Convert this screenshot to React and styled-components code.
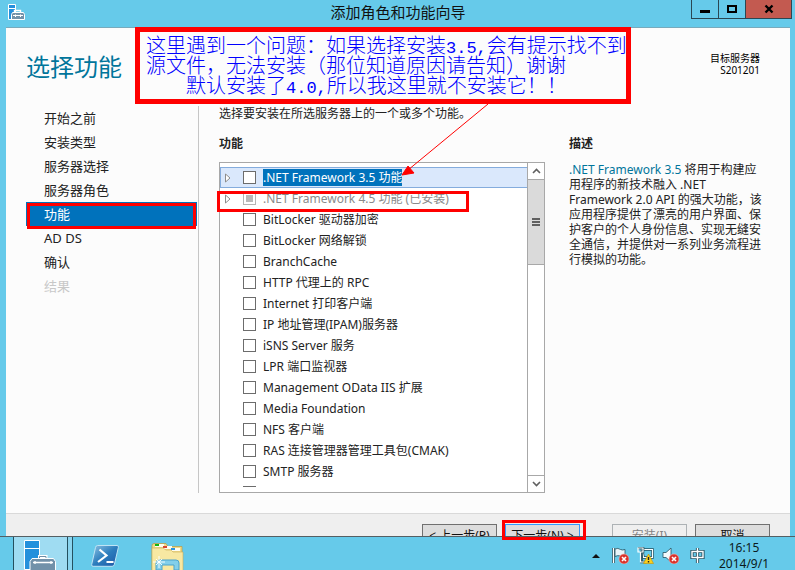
import React, { useState } from 'react'
import styled, { createGlobalStyle, css } from 'styled-components'

const colors = {
    sky: '#66caea',
    panel: '#fcfcfc',
    accent: '#0072bc',
    title: '#00759b',
    text: '#222222',
    muted: '#c8c8c8',
    line: '#a8a8a8',
    mark: '#ff0000',
}

const GlobalStyle = createGlobalStyle`
    *
    {
        box-sizing: border-box;
    }
    body
    {
        margin: 0;
        overflow: hidden;
        font-family: "Noto Sans", "Noto Sans CJK SC", sans-serif;
        font-size: 12px;
        color: ${colors.text};
    }
    button, input
    {
        font: inherit;
        color: inherit;
        margin: 0;
        padding: 0;
    }
    h1, h2, p, ul
    {
        margin: 0;
        padding: 0;
    }
`
const Desktop = styled.div`
    position: relative;
    display: flex;
    flex-direction: column;
    height: 100vh;
    overflow: hidden;
    background-color: ${colors.sky};
`
const Window = styled.section`
    flex: 1;
    min-height: 0;
    padding: 0 5px 0 6px;
`
const TitleBar = styled.header`
    display: grid;
    grid-template-columns: 1fr auto 1fr;
    height: 28px;
    border-bottom: 1px solid #78aabc;
`
const TitleIcon = styled.svg`
    width: 17px;
    height: 17px;
    margin: 4px 0 0 2px;
`
const Title = styled.h1`
    font-size: 15px;
    font-weight: 400;
    line-height: 25px;
    color: #111111;
`
const WindowButtons = styled.div`
    display: flex;
    justify-content: flex-end;
    height: 19px;
    margin-right: -2px;
`
const WindowButton = styled.button`
    display: flex;
    justify-content: center;
    align-items: center;
    width: ${({ $close }) => $close ? '47px' : '28px'};
    border: 1px solid #2a4753;
    border-top: 0;
    margin-left: -1px;
    background-color: ${({ $close }) => $close ? '#c35a50' : colors.sky};
`
const PageHead = styled.div`
    display: flex;
    justify-content: space-between;
    align-items: flex-start;
    height: 78px;
    padding: 23px 30px 0 20px;
    background-color: ${colors.panel};
`
const PageTitle = styled.h2`
    font-size: 24px;
    font-weight: 400;
    line-height: 32px;
    color: ${colors.title};
`
const Target = styled.p`
    font-size: 10px;
    line-height: 12px;
    padding-top: 1px;
    text-align: right;
    color: #000000;
`
const Content = styled.div`
    display: flex;
    padding: 0 25px 20px 20px;
    background-color: ${colors.panel};
`
const Steps = styled.nav`
    width: 173px;
    flex-shrink: 0;
    padding-right: 1px;
    border-right: 1px solid #c6c6c6;
    margin-right: 20px;
`
const Step = styled.a`
    display: block;
    position: relative;
    padding-left: 18px;
    font-size: 13px;
    line-height: 24px;
    text-decoration: none;
    color: ${({ $disabled }) => $disabled ? colors.muted : colors.text};
    ${({ $active }) => $active && css`
        color: #ffffff;
        background-color: ${colors.accent};
    `}
`
const Mark = styled.span`
    position: absolute;
    z-index: 3;
    pointer-events: none;
    border: 3px solid ${colors.mark};
`
const StepMark = styled(Mark)`
    inset: 1px 1px -3px 1px;
`
const RowMark = styled(Mark)`
    top: 3px;
    bottom: -3px;
    left: -3px;
    width: 252px;
`
const ButtonMark = styled(Mark)`
    top: -5px;
    left: -4px;
    right: -7px;
    height: 20px;
`
const Main = styled.main`
    flex: 1;
    min-width: 0;
`
const Intro = styled.p`
    line-height: 16px;
    margin-bottom: 14px;
`
const Panels = styled.div`
    display: grid;
    grid-template-columns: minmax(0, 1fr) 196px;
    gap: 24px;
`
const PanelTitle = styled.h2`
    font-size: 12px;
    font-weight: 700;
    line-height: 16px;
    margin-bottom: 10px;
`
const ListBox = styled.div`
    display: flex;
    border: 1px solid ${colors.line};
    background-color: #ffffff;
`
const Rows = styled.ul`
    flex: 1;
    min-width: 0;
    height: 320px;
    margin: 4px 0 5px;
    list-style: none;
    overflow: hidden;
`
const RowsFrame = styled.div`
    position: relative;
    flex: 1;
    min-width: 0;
`
const MarkSlot = styled.div`
    position: absolute;
    left: 0;
    right: 0;
    top: 25px;
    height: 21px;
    pointer-events: none;
`
const Row = styled.li`
    display: flex;
    align-items: center;
    height: 21px;
    padding-left: 4px;
    border: 1px solid transparent;
    border-right: 0;
    ${({ $selected }) => $selected && css`
        background-color: #dae8fc;
        border-color: #84acdd;
    `}
`
const Expander = styled.button`
    display: flex;
    align-items: center;
    width: 18px;
    height: 13px;
    border: 0;
    background: transparent;
`
const CheckBox = styled.input`
    appearance: none;
    flex-shrink: 0;
    width: 13px;
    height: 13px;
    border: 1px solid #6c6c6c;
    background-color: #ffffff;
    &:checked
    {
        box-shadow: inset 0 0 0 2px #ffffff;
        background-color: ${colors.accent};
    }
    &:disabled
    {
        border-color: #b4b4b4;
        box-shadow: inset 0 0 0 2px #ffffff;
        background-color: #b9b9b9;
    }
`
const RowLabel = styled.label`
    margin-left: 7px;
    line-height: 17px;
    white-space: nowrap;
    ${({ $disabled }) => $disabled && css`color: #8a8a8a;`}
    ${({ $selected }) => $selected && css`
        color: #ffffff;
        background-color: ${colors.accent};
    `}
`
const ScrollBar = styled.div`
    display: flex;
    flex-direction: column;
    width: 17px;
    border-left: 1px solid ${colors.line};
`
const ScrollButton = styled.button`
    display: flex;
    justify-content: center;
    align-items: center;
    height: 16px;
    border: 0;
    background-color: #ffffff;
`
const ScrollTrack = styled.div`
    flex: 1;
    border-bottom: 1px solid ${colors.line};
`
const ScrollThumb = styled.div`
    display: flex;
    flex-direction: column;
    justify-content: center;
    align-items: center;
    gap: 1px;
    height: 86px;
    border: 1px solid ${colors.line};
    border-left: 0;
    border-right: 0;
    background-color: #dadada;
`
const Grip = styled.span`
    width: 8px;
    height: 2px;
    background-color: #606060;
`
const Description = styled.p`
    line-height: 15px;
`
const Keyword = styled.span`
    color: ${colors.title};
`
const Footer = styled.footer`
    display: flex;
    justify-content: flex-end;
    gap: 8px;
    height: 60px;
    padding: 10px 20px 0;
    border-top: 1px solid #d9d9d9;
    background-color: #efefef;
`
const FooterButton = styled.button`
    position: relative;
    width: 75px;
    height: 24px;
    border: 1px solid #707070;
    background-color: #dddddd;
    color: #111111;
    line-height: 20px;
    ${({ $primary }) => $primary && css`
        border-color: #3399ff;
        margin-right: 24px;
    `}
    &:disabled
    {
        border-color: #adb2b5;
        background-color: #efefef;
        color: #838383;
    }
`
const Note = styled.aside`
    position: absolute;
    z-index: 4;
    top: 27px;
    left: 135px;
    width: 496px;
    padding: 3px 0 4px 6px;
    border: 5px solid ${colors.mark};
    background-color: ${colors.panel};
    font-family: "Noto Sans CJK SC", sans-serif;
    font-size: 20px;
    font-weight: 300;
    line-height: 20px;
    white-space: nowrap;
    color: #0000ff;
`
const NoteLine = styled.p`
    height: 20px;
    ${({ $indent }) => $indent && css`padding-left: 40px;`}
`
const Mono = styled.span`
    font-family: "Liberation Mono", monospace;
    font-size: 17px;
    line-height: 1;
`
const NoteArrow = styled.svg`
    position: absolute;
    top: 72px;
    left: 260px;
    width: 90px;
    height: 74px;
    pointer-events: none;
`
const Taskbar = styled.footer`
    position: relative;
    z-index: 2;
    display: flex;
    gap: 2px;
    height: 34px;
    padding: 0 21px 0 13px;
    border-top: 1px solid #555f63;
    background-color: ${colors.sky};
`
const TaskButton = styled.button`
    width: 60px;
    height: 33px;
    border: 0;
    background: transparent;
    overflow: hidden;
    svg
    {
        display: block;
        margin: 0 auto;
    }
    ${({ $active }) => $active && css`
        padding-right: 8px;
        border: solid #24505f;
        border-width: 0 1px;
        background: linear-gradient(to right, #9fdcf2 53px, #24505f 53px, #24505f 54px, #8ad4ee 54px);
    `}
`
const Tray = styled.div`
    display: flex;
    align-items: center;
    gap: 8px;
    margin-left: auto;
    padding-top: 4px;
`
const TrayIcon = styled.button`
    display: flex;
    justify-content: center;
    align-items: center;
    width: 17px;
    height: 18px;
    border: 0;
    background: transparent;
`
const InputMode = styled(TrayIcon)`
    margin-left: 2px;
`
const Clock = styled.time`
    width: 60px;
    font-size: 12px;
    line-height: 16px;
    text-align: center;
    color: #0b1a20;
`

const steps = ['开始之前', '安装类型', '服务器选择', '服务器角色', '功能', 'AD DS', '确认', '结果']

const features = [
    { name: '.NET Framework 3.5 功能', expandable: true },
    { name: '.NET Framework 4.5 功能 (已安装)', expandable: true, installed: true },
    { name: 'BitLocker 驱动器加密' },
    { name: 'BitLocker 网络解锁' },
    { name: 'BranchCache' },
    { name: 'HTTP 代理上的 RPC' },
    { name: 'Internet 打印客户端' },
    { name: 'IP 地址管理(IPAM)服务器' },
    { name: 'iSNS Server 服务' },
    { name: 'LPR 端口监视器' },
    { name: 'Management OData IIS 扩展' },
    { name: 'Media Foundation' },
    { name: 'NFS 客户端' },
    { name: 'RAS 连接管理器管理工具包(CMAK)' },
    { name: 'SMTP 服务器' },
    { name: '' },
]

function ErrorBadge() {
    return (
        <g>
            <circle cx="12" cy="12" r="5" fill="#d9322b" stroke="#f3b5b0" strokeWidth="0.6" />
            <path d="M10 10l4 4M14 10l-4 4" stroke="#fff" strokeWidth="1.6" />
        </g>
    )
}

function ServerIcon() {
    return (
        <svg width="34" height="33" viewBox="0 0 34 33">
            <path d="M2.500 3.500h15v29h-15z" fill="#2490dc" stroke="#fff" />
            <path d="M2.500 11.500h15" stroke="#fff" />
            <path d="M17.500 22v-2.500h6.500v2.500" fill="none" stroke="#fff" strokeWidth="3" />
            <path d="M17.500 22v-2.500h6.500v2.500" fill="none" stroke="#6f8ea6" />
            <path d="M10 21.500h21.500l2 3v9h-25.500v-9z" fill="#7291a9" stroke="#fff" />
            <path d="M11 25.500h20M13 24v3M29 24v3" stroke="#fff" strokeWidth="1.300" />
        </svg>
    )
}

function PowerShellIcon() {
    return (
        <svg width="30" height="33" viewBox="0 0 30 33">
            <defs>
                <linearGradient id="ps" x1="0" y1="0" x2="1" y2="1">
                    <stop offset="0" stopColor="#8fc4e4" />
                    <stop offset="0.5" stopColor="#2c7dbd" />
                    <stop offset="1" stopColor="#1d55a5" />
                </linearGradient>
            </defs>
            <path d="M7.500 8.500h19.500q1.800 0 1.400 1.800l-4 17q-0.500 2-2.300 2h-19q-1.800 0-1.400-1.800l3.800-17q0.400-2 2-2z" fill="url(#ps)" stroke="#bfe4f5" />
            <path d="M9.500 12.500l7 6l-8.500 6.500M16.500 25h7" fill="none" stroke="#fff" strokeWidth="2.200" />
        </svg>
    )
}

function FolderIcon() {
    return (
        <svg width="34" height="33" viewBox="0 0 34 33">
            <path d="M2 8.500q0-2 2-2h12l2 3h14v25h-30z" fill="#f0d987" stroke="#b99b41" strokeWidth="0.700" />
            <path d="M5 7h9v3h-9zM13 9h9v3h-9zM21 11h9v3h-9z" fill="#fffdf0" />
            <path d="M5 7h4v2h-4z" fill="#13b413" />
            <path d="M13 9h4v2h-4z" fill="#d8452e" />
            <path d="M21 11h4v2h-4z" fill="#2b93e0" />
            <path d="M2 11h11l3 2h5l2 2h10v19h-31z" fill="#f8e8a2" stroke="#c9ad58" strokeWidth="0.600" />
            <path d="M6 33v-7q0-3 3-3h17q3 0 3 3v7h-5v-5h-12v5z" fill="#83cfea" stroke="#4aa3cc" />
            <path d="M9 19v12M3 25h12M6 22l6 6M12 22l-6 6" stroke="#fff" strokeWidth="0.900" />
        </svg>
    )
}

export default function App() {
    const [ selected, setSelected ] = useState(0)
    const [ checked, setChecked ] = useState({})
    return (
        <Desktop>
            <GlobalStyle />
            <Window>
                <TitleBar>
                    <TitleIcon viewBox="0 0 17 17">
                        <path d="M0.500 0.500h7v15h-7z" fill="#2490dc" stroke="#fff" />
                        <path d="M0 4.500h8" stroke="#fff" />
                        <path d="M6.500 8.500v-2h6v2" fill="none" stroke="#fff" strokeWidth="1.400" />
                        <path d="M4.500 8.500h11l1 2v5h-13v-5z" fill="#7291a9" stroke="#fff" />
                        <path d="M5 11.500h10M7.500 10.500v2.500M12.500 10.500v2.500" stroke="#fff" />
                    </TitleIcon>
                    <Title>添加角色和功能向导</Title>
                    <WindowButtons>
                        <WindowButton aria-label="最小化">
                            <svg width="10" height="10"><path d="M0 6h10v3h-10z" /></svg>
                        </WindowButton>
                        <WindowButton aria-label="最大化">
                            <svg width="10" height="10"><path d="M1 2h8v6h-8z" fill="none" stroke="#000" strokeWidth="2" /></svg>
                        </WindowButton>
                        <WindowButton $close aria-label="关闭">
                            <svg width="10" height="10"><path d="M1.500 1.500l7 7M8.500 1.500l-7 7" stroke="#000" strokeWidth="2.400" /></svg>
                        </WindowButton>
                    </WindowButtons>
                </TitleBar>
                <PageHead>
                    <PageTitle>选择功能</PageTitle>
                    <Target>目标服务器<br />S201201</Target>
                </PageHead>
                <Content>
                    <Steps>
                        {steps.map(step => (
                            <Step key={step} href="#" $active={step === '功能'} $disabled={step === '结果'}>
                                {step}
                                {step === '功能' && <StepMark />}
                            </Step>
                        ))}
                    </Steps>
                    <Main>
                        <Intro>选择要安装在所选服务器上的一个或多个功能。</Intro>
                        <Panels>
                            <div>
                                <PanelTitle>功能</PanelTitle>
                                <ListBox>
                                    <RowsFrame>
                                        <Rows>
                                            {features.map((feature, i) => (
                                                <Row key={i} $selected={selected === i} onClick={() => setSelected(i)}>
                                                    <Expander aria-label="展开" disabled={!feature.expandable}>
                                                        {feature.expandable && (
                                                            <svg width="6" height="10"><path d="M0.500 1l4.500 4l-4.500 4z" fill="#fff" stroke="#8c8c8c" /></svg>
                                                        )}
                                                    </Expander>
                                                    <CheckBox
                                                        type="checkbox"
                                                        id={`feature-${i}`}
                                                        disabled={feature.installed}
                                                        checked={!!checked[i]}
                                                        onChange={() => setChecked(state => ({ ...state, [i]: !state[i] }))}
                                                    />
                                                    <RowLabel htmlFor={`feature-${i}`} $selected={selected === i} $disabled={feature.installed}>
                                                        {feature.name}
                                                    </RowLabel>
                                                </Row>
                                            ))}
                                        </Rows>
                                        <MarkSlot><RowMark /></MarkSlot>
                                    </RowsFrame>
                                    <ScrollBar>
                                        <ScrollButton aria-label="向上">
                                            <svg width="9" height="6"><path d="M1 5l3.500-3.500l3.500 3.500" fill="none" stroke="#606060" strokeWidth="1.600" /></svg>
                                        </ScrollButton>
                                        <ScrollTrack>
                                            <ScrollThumb><Grip /><Grip /><Grip /></ScrollThumb>
                                        </ScrollTrack>
                                        <ScrollButton aria-label="向下">
                                            <svg width="9" height="6"><path d="M1 1l3.500 3.500l3.500-3.500" fill="none" stroke="#606060" strokeWidth="1.600" /></svg>
                                        </ScrollButton>
                                    </ScrollBar>
                                </ListBox>
                            </div>
                            <div>
                                <PanelTitle>描述</PanelTitle>
                                <Description>
                                    <Keyword>.NET Framework 3.5</Keyword> 将用于构建应用程序的新技术融入 .NET Framework 2.0 API 的强大功能，该应用程序提供了漂亮的用户界面、保护客户的个人身份信息、实现无缝安全通信，并提供对一系列业务流程进行模拟的功能。
                                </Description>
                            </div>
                        </Panels>
                    </Main>
                </Content>
                <Footer>
                    <FooterButton>{'< 上一步(P)'}</FooterButton>
                    <FooterButton $primary>{'下一步(N) >'}<ButtonMark /></FooterButton>
                    <FooterButton disabled>安装(I)</FooterButton>
                    <FooterButton>取消</FooterButton>
                </Footer>
            </Window>
            <Note>
                <NoteLine>这里遇到一个问题：如果选择安装<Mono>3.5,</Mono>会有提示找不到</NoteLine>
                <NoteLine>源文件，无法安装（那位知道原因请告知）谢谢</NoteLine>
                <NoteLine $indent>默认安装了<Mono>4.0,</Mono>所以我这里就不安装它！！</NoteLine>
                <NoteArrow viewBox="0 0 90 74">
                    <path d="M88 0L8 66" stroke="#f00" />
                    <path d="M2 71l6-9l6 7z" fill="#f00" stroke="#f00" />
                </NoteArrow>
            </Note>
            <Taskbar>
                <TaskButton $active aria-label="服务器管理器"><ServerIcon /></TaskButton>
                <TaskButton aria-label="PowerShell"><PowerShellIcon /></TaskButton>
                <TaskButton aria-label="文件资源管理器"><FolderIcon /></TaskButton>
                <Tray>
                    <TrayIcon aria-label="显示隐藏的图标">
                        <svg width="8" height="4"><path d="M0 4l4-4l4 4z" fill="#111" /></svg>
                    </TrayIcon>
                    <TrayIcon aria-label="操作中心">
                        <svg width="17" height="17" viewBox="0 0 17 17">
                            <path d="M1.500 1v15" stroke="#24505f" strokeWidth="3" />
                            <path d="M1.500 1v15" stroke="#fff" strokeWidth="1.400" />
                            <path d="M3 2q3-1.500 5.500 0.500q2 1 4.500 0v7q-3 1-5-0.500q-2-1-5 0.500z" fill="#e9f5fa" stroke="#24505f" strokeWidth="0.800" />
                            <ErrorBadge />
                        </svg>
                    </TrayIcon>
                    <TrayIcon aria-label="网络">
                        <svg width="17" height="17" viewBox="0 0 17 17">
                            <path d="M5 2.500h10.500v8h-9z" fill="#66caea" stroke="#24505f" strokeWidth="2.600" />
                            <path d="M5 2.500h10.500v8h-9z" fill="none" stroke="#fff" strokeWidth="1.200" />
                            <path d="M1 1h5v4h-1.500v10h5" fill="none" stroke="#24505f" strokeWidth="2.600" />
                            <path d="M1 1h5v4h-5zM3.500 5v10h5" fill="none" stroke="#fff" strokeWidth="1.200" />
                            <path d="M11.500 7l5 9.500h-10z" fill="#fccf1c" stroke="#c89300" strokeWidth="0.600" />
                            <path d="M11.500 10v3M11.500 14v1.500" stroke="#222" strokeWidth="1.400" />
                        </svg>
                    </TrayIcon>
                    <TrayIcon aria-label="音量">
                        <svg width="17" height="17" viewBox="0 0 17 17">
                            <path d="M1 5.500h3l5-4.500v14l-5-4.500h-3z" fill="#f4fafc" stroke="#24505f" strokeWidth="0.800" />
                            <ErrorBadge />
                        </svg>
                    </TrayIcon>
                    <InputMode aria-label="中文输入">
                        <svg width="15" height="17" viewBox="0 0 15 17">
                            <path d="M2 4.500h11v6h-11zM7.500 1v15" fill="none" stroke="#24505f" strokeWidth="3.200" />
                            <path d="M2 4.500h11v6h-11zM7.500 1v15" fill="none" stroke="#fff" strokeWidth="1.400" />
                        </svg>
                    </InputMode>
                    <Clock>16:15<br />2014/9/1</Clock>
                </Tray>
            </Taskbar>
        </Desktop>
    )
}
